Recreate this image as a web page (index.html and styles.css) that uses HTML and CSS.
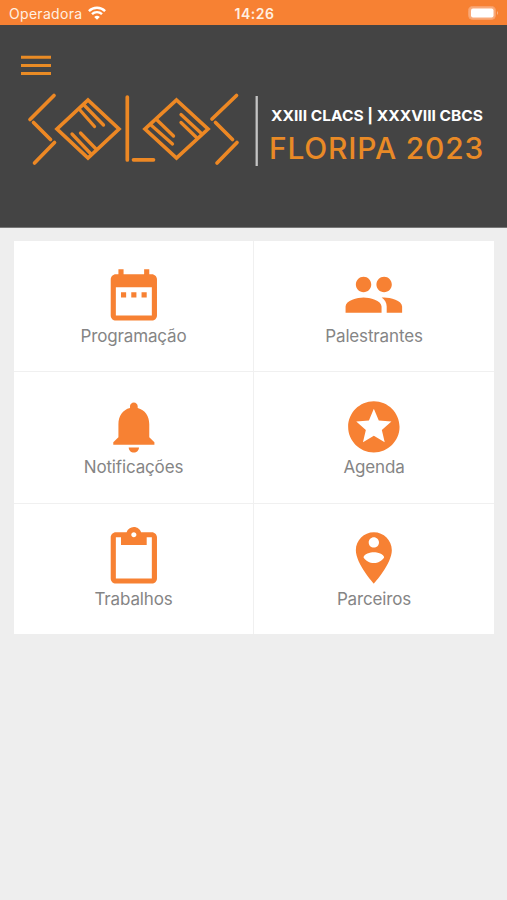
FILE: index.html
```html
<!DOCTYPE html>
<html lang="pt-BR">
<head>
<meta charset="utf-8">
<meta name="viewport" content="width=device-width, initial-scale=1">
<title>Solos Floripa 2023</title>
<link rel="stylesheet" href="styles.css">
</head>
<body>
<div class="status">
  <div class="carrier"><span>Operadora</span>
    <svg class="wifi" width="18" height="14" viewBox="0 0 18 14"><g fill="none" stroke="#fff" stroke-width="2.4"><path d="M.9 5.1A11.5 11.5 0 0 1 17.1 5.1"/><path d="M4 8.2A7.1 7.1 0 0 1 14 8.2"/></g><path d="M9 13.8L6.2 11a4 4 0 0 1 5.6 0z" fill="#fff"/></svg>
  </div>
  <time class="clock">14:26</time>
  <svg class="battery" width="32" height="14" viewBox="0 0 32 14"><rect x=".6" y=".6" width="26.8" height="12.8" rx="4" fill="#f9ab7b" stroke="#f8a06a"/><rect x="3" y="2.6" width="22.5" height="8.8" rx="2" fill="#fff"/><path d="M29 5q2 2 0 4z" fill="#f9b68e"/></svg>
</div>
<header class="header">
  <button class="menu" aria-label="Menu"><svg width="30" height="22" viewBox="0 0 30 22"><path d="M0 2.200H30M0 10.500H30M0 18.600H30" stroke="#e98b25" stroke-width="3"/></svg></button>
  <svg class="logo" width="507" height="90" viewBox="0 85 507 90">
    <g fill="none" stroke="#ed8824" stroke-width="3.700" stroke-linecap="round">
      <path d="M54 95.500L30 119.500M33.500 122.500L50.500 139.500M54.500 142.500L34.500 163"/>
      <path d="M88 100L119 129L88 158L57 129Z"/>
      <path d="M79.500 109.500L94.500 126.500M84 105L103.500 125M72 134L91 154M80.500 133L96 149" stroke-width="3.300"/>
      <path d="M127.300 97V160M133.500 159.800H153.500"/>
      <path d="M176.500 100L208 129L176.500 158L145 129Z"/>
      <path d="M157 120L173.500 136M151 125L172.500 144M181 114.500L202 134M181 122.500L197 138" stroke-width="3.300"/>
      <path d="M236.500 95.500L212 119M215.500 122.500L232.500 139.500M237 142.500L217 163"/>
    </g>
    <path d="M256.700 96V166" stroke="#c4c4c4" stroke-width="2.300"/>
    <text class="event" x="271" y="120.500" textLength="212" lengthAdjust="spacingAndGlyphs">XXIII CLACS | XXXVIII CBCS</text>
    <text class="city" x="269" y="159" textLength="215" lengthAdjust="spacingAndGlyphs">FLORIPA 2023</text>
  </svg>
</header>
<main class="grid">
  <a class="tile"><svg class="icon" viewBox="0 0 24 24"><path d="M9 11H7v2h2v-2zm4 0h-2v2h2v-2zm4 0h-2v2h2v-2zm2-7h-1V2h-2v2H8V2H6v2H5c-1.110 0-1.990.9-1.990 2L3 20c0 1.100.89 2 2 2h14c1.100 0 2-.9 2-2V6c0-1.100-.9-2-2-2zm0 16H5V9h14v11z"/></svg><span>Programação</span></a>
  <a class="tile"><svg class="icon" viewBox="0 0 24 24"><path d="M16 11c1.660 0 2.990-1.340 2.990-3S17.660 5 16 5s-3 1.340-3 3 1.340 3 3 3zm-8 0c1.660 0 2.990-1.340 2.990-3S9.660 5 8 5 5 6.340 5 8s1.340 3 3 3zm0 2c-2.330 0-7 1.170-7 3.500V19h14v-2.500c0-2.330-4.670-3.500-7-3.500zm8 0c-.29 0-.62.02-.97.05 1.160.84 1.970 1.970 1.970 3.450V19h6v-2.500c0-2.330-4.670-3.500-7-3.500z"/></svg><span>Palestrantes</span></a>
  <a class="tile"><svg class="icon" viewBox="0 0 24 24"><path d="M12 22c1.100 0 2-.9 2-2h-4c0 1.100.89 2 2 2zm6-6v-5c0-3.070-1.640-5.640-4.500-6.320V4c0-.83-.67-1.500-1.500-1.500s-1.500.67-1.500 1.500v.68C7.630 5.360 6 7.920 6 11v5l-2 2v1h16v-1l-2-2z"/></svg><span>Notificações</span></a>
  <a class="tile"><svg class="icon" viewBox="0 0 24 24"><path d="M11.990 2C6.470 2 2 6.480 2 12s4.470 10 9.990 10C17.520 22 22 17.520 22 12S17.520 2 11.990 2zm4.240 16L12 15.450 7.770 18l1.120-4.810-3.730-3.230 4.920-.42L12 5l1.920 4.530 4.920.42-3.730 3.230L16.230 18z"/></svg><span>Agenda</span></a>
  <a class="tile"><svg class="icon" viewBox="0 0 24 24"><path d="M19 2h-4.180C14.400.84 13.300 0 12 0c-1.300 0-2.400.84-2.820 2H5c-1.100 0-2 .9-2 2v16c0 1.100.9 2 2 2h14c1.100 0 2-.9 2-2V4c0-1.100-.9-2-2-2zm-7 0c.55 0 1 .45 1 1s-.45 1-1 1-1-.45-1-1 .45-1 1-1zm7 18H5V4h2v3h10V4h2v16z"/></svg><span>Trabalhos</span></a>
  <a class="tile"><svg class="icon" viewBox="0 0 24 24"><path d="M12 2C8.140 2 5 5.140 5 9c0 5.250 7 13 7 13s7-7.750 7-13c0-3.860-3.140-7-7-7zm0 2c1.100 0 2 .9 2 2 0 1.110-.9 2-2 2s-2-.89-2-2c0-1.100.9-2 2-2zm0 10c-1.670 0-3.140-.85-4-2.150.02-1.320 2.670-2.050 4-2.050s3.980.73 4 2.050c-.86 1.300-2.330 2.150-4 2.150z"/></svg><span>Parceiros</span></a>
</main>
</body>
</html>
```
FILE: styles.css
```css
* { box-sizing: border-box; }
body {
  margin: 0;
  min-height: 100vh;
  background: #eeeeee;
  font-family: Inter, "Liberation Sans", sans-serif;
}
.status {
  height: 25px;
  padding: 2px 7px 0 9px;
  display: grid;
  grid-template-columns: 1fr auto 1fr;
  align-items: center;
  background: #f78133;
  color: #fff0e2;
  font-size: 14px;
  line-height: 22px;
}
.carrier { display: flex; align-items: center; gap: 6px; letter-spacing: 0.3px; }
.wifi { margin-top: -2px; }
.clock { font-weight: 600; letter-spacing: 0.5px; }
.battery { justify-self: end; margin-top: -1px; }
.header {
  height: 203px;
  padding-top: 30px;
  background: #444444;
  border-bottom: 1px solid #777;
}
.menu {
  display: block;
  width: 30px;
  height: 22px;
  margin: 0 0 8px 21px;
  padding: 0;
  border: 0;
  background: none;
}
.menu svg { display: block; }
.logo { display: block; }
.event { font-size: 14.5px; font-weight: 700; fill: #fff; }
.city { font-size: 29.5px; font-weight: 500; letter-spacing: 0.8px; fill: #e98a26; }
.grid {
  display: grid;
  grid-template-columns: 239px 240px;
  grid-auto-rows: 130.5px;
  gap: 1px;
  width: 480px;
  margin: 12.5px 0 0 14px;
  background: #f0f0f0;
}
.tile {
  display: flex;
  flex-direction: column;
  align-items: center;
  padding-top: 23.5px;
  background: #fff;
  color: #858585;
  font-size: 17px;
  letter-spacing: -0.15px;
  line-height: 20px;
}
.icon { width: 61.7px; height: 61.7px; fill: #f78133; }
```
